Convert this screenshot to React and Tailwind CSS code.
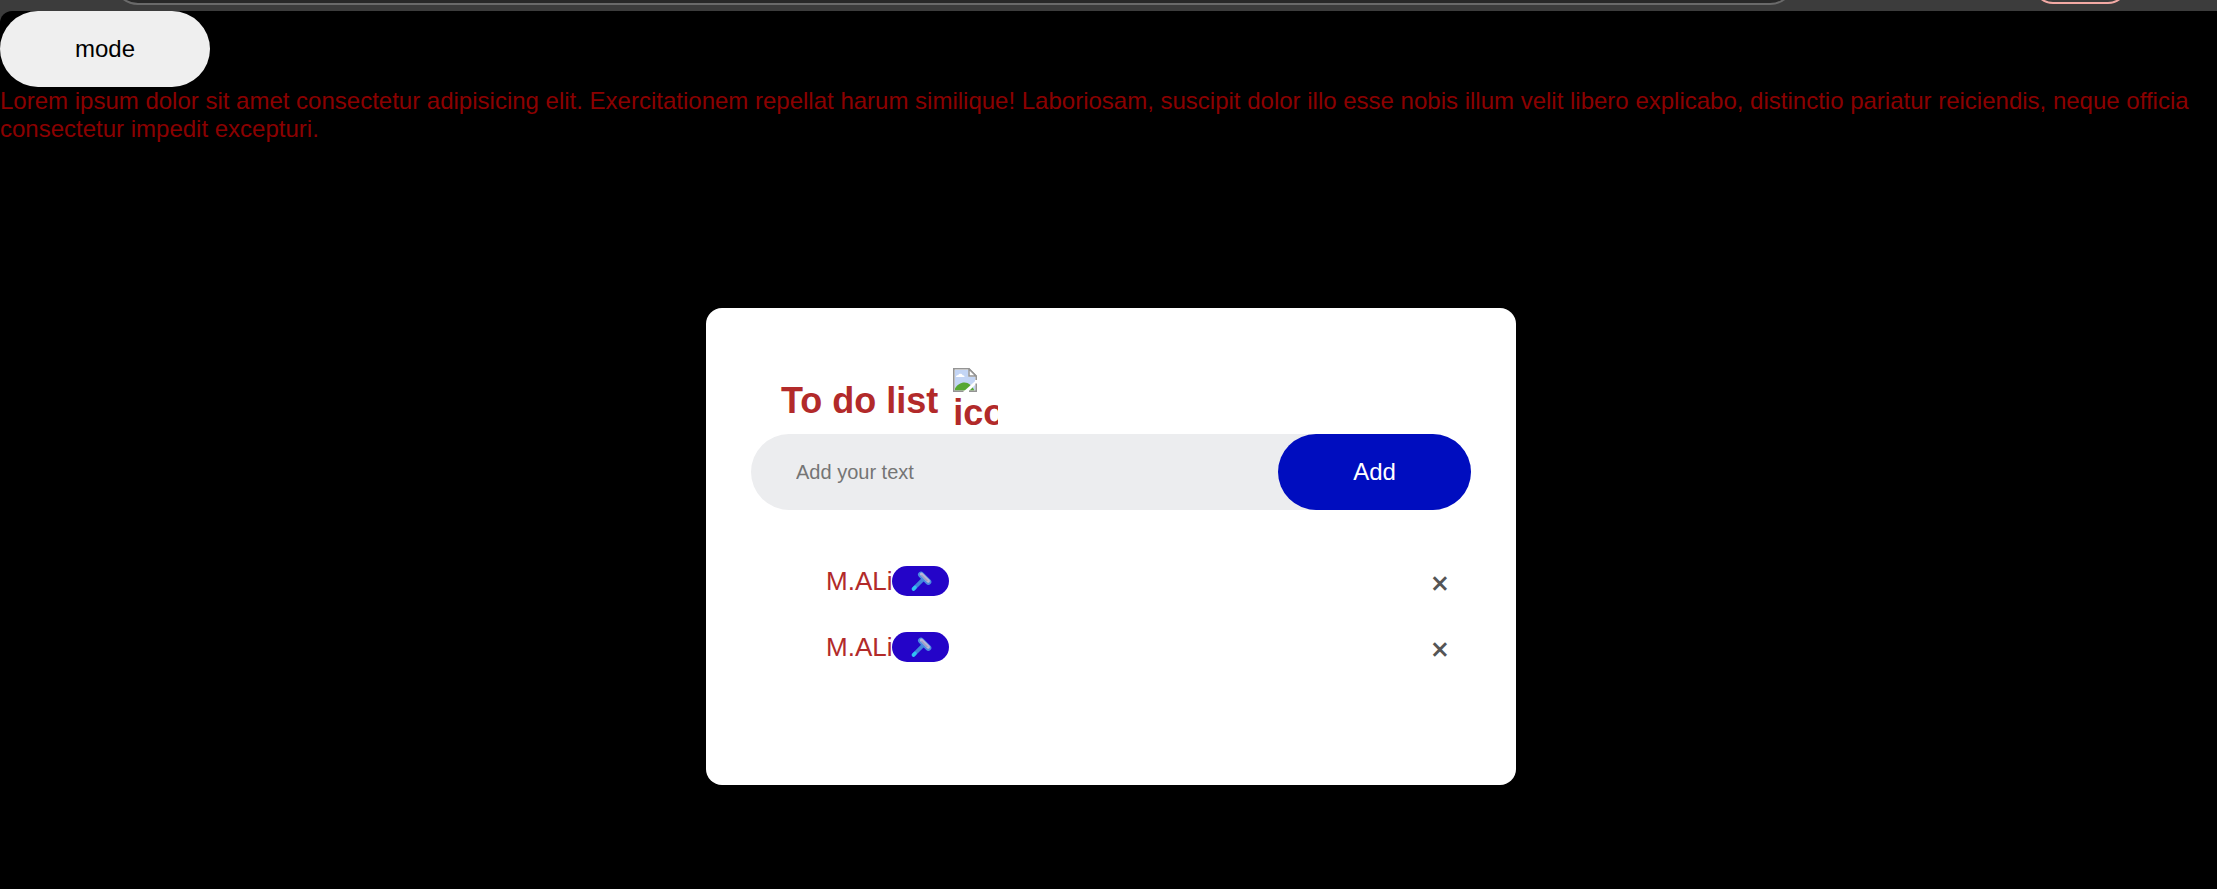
import { useState } from "react";

function BrowserEdge() {
  return (
    <div className="flex h-[11px] items-end overflow-hidden pb-[6px] pl-[113px] pr-[89px]">
      <div className="h-[60px] min-w-0 flex-1 shrink-0 rounded-[25px] border-2 border-[#6a6a6a] bg-[#282828]" />
      <div className="mb-[1px] ml-[238px] h-[50px] w-[95px] shrink-0 rounded-[20px] border-2 border-[#f2a9a4] bg-[#3c3c3c]" />
    </div>
  );
}

function BrokenImage() {
  return (
    <svg viewBox="0 0 24 24" className="block size-6" aria-hidden="true">
      <path d="M.5.5h15.500l7.500 7.500v15.500H.5z" fill="#fff" />
      <path d="M2 2h13.500v7H22v13H2z" fill="#c3d5f5" />
      <path d="M3 9c0-1.600 1.400-2 2.300-1.700C5.700 5.500 9 5.300 9.500 7.300 11 7 11.500 8 11.500 9z" fill="#fff" />
      <path d="M2 22.500v-2c2-3.500 5.500-6 9.500-6s7.500 3 10 8z" fill="#57a733" />
      <path d="M24 11.500v3.500L15 24h-5z" fill="#fff" />
      <path d="M.8 24V.8H16l7.200 7.200v4M.8 23.200h9.700M23.200 15.500v7.700H16" fill="none" stroke="#949494" strokeWidth="1.600" />
      <path d="M16 1v7h7z" fill="#fff" stroke="#949494" strokeWidth="1.500" />
    </svg>
  );
}

function Razor() {
  return (
    <svg viewBox="0 0 24 24" className="size-[22px]" aria-hidden="true">
      <path d="M4 20.500L14.500 10" stroke="#3f86dc" strokeWidth="4" strokeLinecap="round" />
      <path d="M3.800 20.700l1.600-1.600" stroke="#2fc3f3" strokeWidth="4" strokeLinecap="round" />
      <path d="M12 5l8 8" stroke="#4a8de0" strokeWidth="6.500" strokeLinecap="round" />
      <path d="M12.500 4.500l7.500 7.500" stroke="#b9b4d6" strokeWidth="3.500" strokeLinecap="round" />
      <path d="M12.500 5.500l6.500 6.500" stroke="#8a84b8" strokeWidth="1" />
    </svg>
  );
}

function Task({ text, onEdit, onRemove }) {
  return (
    <li className="flex h-[66px] items-center justify-between pl-[75px] pr-[15px]">
      <div className="flex items-center">
        <span className="text-[26px] leading-[30px] text-[#b22a2a]">{text}</span>
        <button
          type="button"
          aria-label={`Edit ${text}`}
          onClick={onEdit}
          className="flex h-[30px] w-[57px] items-center justify-center rounded-full bg-[#2404c8]"
        >
          <Razor />
        </button>
      </div>
      <button
        type="button"
        aria-label={`Remove ${text}`}
        onClick={onRemove}
        className="size-8 pt-0.5 font-['Open_Sans',sans-serif] text-[32px] leading-8 font-semibold text-[#555]"
      >
        ×
      </button>
    </li>
  );
}

export default function App() {
  const [dark, setDark] = useState(true);
  const [draft, setDraft] = useState("");
  const [tasks, setTasks] = useState([
    { id: 1, text: "M.ALi" },
    { id: 2, text: "M.ALi" },
  ]);

  const addTask = (event) => {
    event.preventDefault();
    if (!draft.trim()) return;
    setTasks([...tasks, { id: Date.now(), text: draft }]);
    setDraft("");
  };

  const removeTask = (id) => setTasks(tasks.filter((task) => task.id !== id));

  return (
    <div className="flex min-h-screen flex-col bg-[#3c3c3c] font-['Liberation_Sans',Arial,sans-serif]">
      <BrowserEdge />
      <main
        className={`flex-1 rounded-tl-xl pb-[104px] ${dark ? "bg-black text-[#8b0000]" : "bg-white text-black"}`}
      >
        <button
          type="button"
          onClick={() => setDark(!dark)}
          className="block h-[76px] w-[210px] rounded-full bg-[#efefef] text-2xl text-black"
        >
          mode
        </button>
        <p className="text-2xl leading-7">
          Lorem ipsum dolor sit amet consectetur adipisicing elit. Exercitationem repellat harum
          similique! Laboriosam, suscipit dolor illo esse nobis illum velit libero explicabo,
          distinctio pariatur reiciendis, neque officia consectetur impedit excepturi.
        </p>
        <div className="pl-[5px]">
          <section className="mx-auto mt-[165px] max-w-[810px] rounded-2xl bg-white px-[45px] pt-[60px] pb-[105px]">
            <h2 className="flex h-[66px] items-start gap-[15px] pl-[30px] text-4xl font-bold text-[#b22a2a]">
              <span className="pt-[13px]">To do list</span>
              <span className="w-[45px] overflow-hidden">
                <BrokenImage />
                <span className="block leading-[42px]">icon</span>
              </span>
            </h2>
            <form onSubmit={addTask} className="flex h-[76px] rounded-full bg-[#ecedef]">
              <input
                type="text"
                aria-label="Add your text"
                placeholder="Add your text"
                value={draft}
                onChange={(event) => setDraft(event.target.value)}
                className="min-w-0 flex-1 bg-transparent pl-[45px] text-[20px] text-black outline-none placeholder:text-[#757575]"
              />
              <button type="submit" className="w-[193px] rounded-full bg-[#000dbf] text-2xl text-white">
                Add
              </button>
            </form>
            <ul className="mt-[38px]">
              {tasks.map((task) => (
                <Task
                  key={task.id}
                  text={task.text}
                  onEdit={() => setDraft(task.text)}
                  onRemove={() => removeTask(task.id)}
                />
              ))}
            </ul>
          </section>
        </div>
      </main>
    </div>
  );
}
